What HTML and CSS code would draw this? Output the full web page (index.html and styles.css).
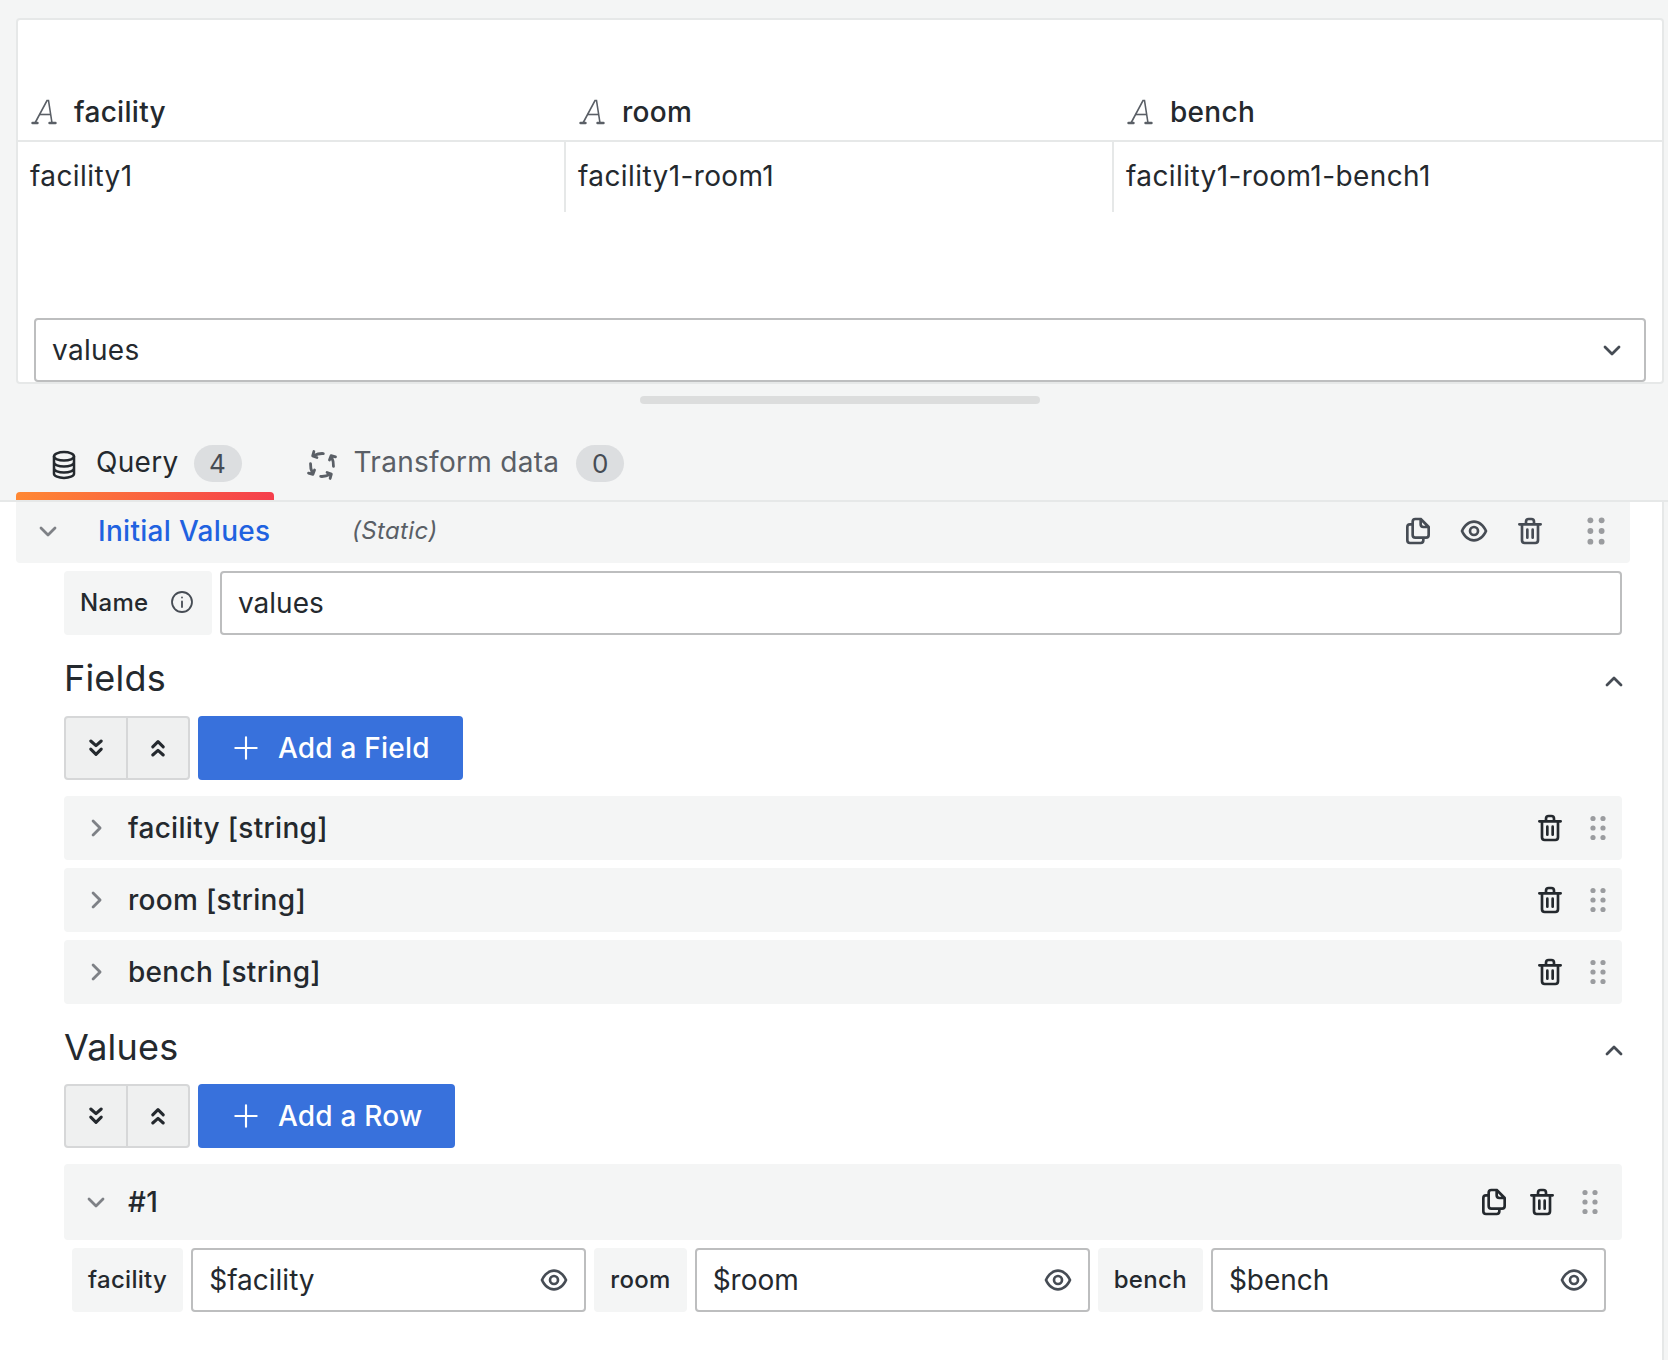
FILE: index.html
```html
<!DOCTYPE html>
<html lang="en">
<head>
    <meta charset="UTF-8">
    <title>Initial Values - Static</title>
    <link rel="stylesheet" href="styles.css">
</head>
<body>

<svg class="sprite" width="0" height="0">
    <symbol id="i-trash" viewBox="0 0 24 24"><path d="M10,18a1,1,0,0,0,1-1V11a1,1,0,0,0-2,0v6A1,1,0,0,0,10,18ZM20,6H16V5a3,3,0,0,0-3-3H11A3,3,0,0,0,8,5V6H4A1,1,0,0,0,4,8H5V19a3,3,0,0,0,3,3h8a3,3,0,0,0,3-3V8h1a1,1,0,0,0,0-2ZM10,5a1,1,0,0,1,1-1h2a1,1,0,0,1,1,1V6H10Zm7,14a1,1,0,0,1-1,1H8a1,1,0,0,1-1-1V8H17Zm-3-1a1,1,0,0,0,1-1V11a1,1,0,0,0-2,0v6A1,1,0,0,0,14,18Z"/></symbol>
    <symbol id="i-eye" viewBox="0 0 24 24"><path d="M21.92,11.6C19.9,6.91,16.1,4,12,4S4.1,6.91,2.08,11.6a1,1,0,0,0,0,.8C4.1,17.09,7.9,20,12,20s7.9-2.91,9.92-7.6A1,1,0,0,0,21.92,11.6ZM12,18c-3.17,0-6.17-2.29-7.9-6C5.83,8.29,8.83,6,12,6s6.17,2.29,7.9,6C18.17,15.71,15.17,18,12,18ZM12,8a4,4,0,1,0,4,4A4,4,0,0,0,12,8Zm0,6a2,2,0,1,1,2-2A2,2,0,0,1,12,14Z"/></symbol>
    <symbol id="i-copy" viewBox="0 0 24 24"><path d="M21,8.94a1.31,1.31,0,0,0-.06-.27l0-.09a1.07,1.07,0,0,0-.19-.28h0l-6-6h0a1.07,1.07,0,0,0-.28-.19.32.32,0,0,0-.09,0A.88.88,0,0,0,14.05,2H10A3,3,0,0,0,7,5V6H6A3,3,0,0,0,3,9V19a3,3,0,0,0,3,3h8a3,3,0,0,0,3-3V18h1a3,3,0,0,0,3-3V9S21,9,21,8.94ZM15,5.41,17.59,8H16a1,1,0,0,1-1-1ZM15,19a1,1,0,0,1-1,1H6a1,1,0,0,1-1-1V9A1,1,0,0,1,6,8H7v7a3,3,0,0,0,3,3h5Zm4-4a1,1,0,0,1-1,1H10a1,1,0,0,1-1-1V5a1,1,0,0,1,1-1h3V7a3,3,0,0,0,3,3h3Z"/></symbol>
    <symbol id="i-dots" viewBox="0 0 32 32"><circle cx="11" cy="6.5" r="2.6"/><circle cx="21" cy="6.5" r="2.6"/><circle cx="11" cy="16" r="2.6"/><circle cx="21" cy="16" r="2.6"/><circle cx="11" cy="25.5" r="2.6"/><circle cx="21" cy="25.5" r="2.6"/></symbol>
    <symbol id="i-down" viewBox="0 0 24 24"><path d="M6 9.5l6 6 6-6" fill="none" stroke="currentColor" stroke-width="2.4" stroke-linecap="round" stroke-linejoin="round"/></symbol>
    <symbol id="i-up" viewBox="0 0 24 24"><path d="M6 14.5l6-6 6 6" fill="none" stroke="currentColor" stroke-width="2.4" stroke-linecap="round" stroke-linejoin="round"/></symbol>
    <symbol id="i-right" viewBox="0 0 24 24"><path d="M9.5 6l6 6-6 6" fill="none" stroke="currentColor" stroke-width="2.4" stroke-linecap="round" stroke-linejoin="round"/></symbol>
    <symbol id="i-dbl-down" viewBox="0 0 24 24"><path d="M7.5 6l4.5 4 4.5-4M7.5 13l4.5 4.5 4.5-4.5" fill="none" stroke="currentColor" stroke-width="2.6" stroke-linecap="round" stroke-linejoin="round"/></symbol>
    <symbol id="i-dbl-up" viewBox="0 0 24 24"><path d="M7.5 11l4.5-4.5 4.5 4.5M7.5 18l4.5-4 4.5 4" fill="none" stroke="currentColor" stroke-width="2.6" stroke-linecap="round" stroke-linejoin="round"/></symbol>
    <symbol id="i-type" viewBox="0 0 32 32"><path d="M7 27L19 4.5h1.5L24 27" fill="none" stroke="currentColor" stroke-width="1.6"/><path d="M11.5 18.5h11" fill="none" stroke="currentColor" stroke-width="1.6"/><path d="M4.5 27h5M21.5 27h6" fill="none" stroke="currentColor" stroke-width="2.4" stroke-linecap="round"/></symbol>
</svg>

<section class="panel">
    <div class="table">
        <div class="table-head">
            <div class="th"><svg class="type-icon"><use href="#i-type"/></svg>facility</div>
            <div class="th"><svg class="type-icon"><use href="#i-type"/></svg>room</div>
            <div class="th"><svg class="type-icon"><use href="#i-type"/></svg>bench</div>
        </div>
        <div class="table-row">
            <div class="td">facility1</div>
            <div class="td">facility1-room1</div>
            <div class="td">facility1-room1-bench1</div>
        </div>
    </div>
    <div class="select">
        <span>values</span>
        <svg class="icon-sm dark"><use href="#i-down"/></svg>
    </div>
</section>

<div class="splitter"></div>

<nav class="tabs">
    <div class="tab active">
        <svg class="icon line-icon" viewBox="0 0 24 24" stroke="currentColor" stroke-width="1.9">
            <ellipse cx="12" cy="5.5" rx="7.5" ry="3.2"/>
            <path d="M4.5 5.5v13c0 1.8 3.4 3.2 7.5 3.2s7.5-1.4 7.5-3.2v-13M4.5 10c0 1.8 3.4 3.2 7.5 3.2s7.5-1.4 7.5-3.2M4.5 14.5c0 1.8 3.4 3.2 7.5 3.2s7.5-1.4 7.5-3.2"/>
        </svg>
        <span>Query</span>
        <span class="badge">4</span>
    </div>
    <div class="tab">
        <svg class="icon line-icon" viewBox="0 0 24 24" stroke="currentColor" stroke-width="2.1" stroke-linecap="round" stroke-linejoin="round">
            <g id="arrow-part"><path d="M13 3.4C10.8 3.2 8.8 3.5 5.6 5M5.9 1.9L5 5.2 8.2 6.4"/></g>
            <use href="#arrow-part" transform="rotate(90 12 12)"/>
            <use href="#arrow-part" transform="rotate(180 12 12)"/>
            <use href="#arrow-part" transform="rotate(270 12 12)"/>
        </svg>
        <span>Transform data</span>
        <span class="badge">0</span>
    </div>
</nav>

<main class="editor">
    <div class="query-head">
        <svg class="icon-sm chevron"><use href="#i-down"/></svg>
        <span class="query-name">Initial Values</span>
        <span class="query-type">(Static)</span>
        <div class="actions">
            <svg class="icon muted"><use href="#i-copy"/></svg>
            <svg class="icon muted"><use href="#i-eye"/></svg>
            <svg class="icon muted"><use href="#i-trash"/></svg>
            <svg class="icon dots dots-far"><use href="#i-dots"/></svg>
        </div>
    </div>

    <div class="query-body">
        <div class="name-row">
            <div class="label label-name">Name <svg class="info line-icon" viewBox="0 0 24 24" stroke="currentColor" stroke-width="1.8" stroke-linecap="round"><circle cx="12" cy="12" r="10"/><path d="M12 11.5v5.5M12 7.4v.2"/></svg></div>
            <div class="input">values</div>
        </div>

        <div class="section-title">
            <h3>Fields</h3>
            <svg class="icon-sm dark"><use href="#i-up"/></svg>
        </div>
        <div class="toolbar">
            <div class="btn-group">
                <div class="btn-square"><svg class="icon-sm"><use href="#i-dbl-down"/></svg></div>
                <div class="btn-square"><svg class="icon-sm"><use href="#i-dbl-up"/></svg></div>
            </div>
            <div class="btn-primary">
                <svg class="icon line-icon" viewBox="0 0 24 24" stroke="currentColor" stroke-width="1.6" stroke-linecap="round"><path d="M12 4v16M4 12h16"/></svg>
                Add a Field
            </div>
        </div>

        <div class="rows">
            <div class="row">
                <svg class="icon-sm chevron"><use href="#i-right"/></svg>
                <span>facility [string]</span>
                <div class="actions">
                    <svg class="icon"><use href="#i-trash"/></svg>
                    <svg class="icon dots"><use href="#i-dots"/></svg>
                </div>
            </div>
            <div class="row">
                <svg class="icon-sm chevron"><use href="#i-right"/></svg>
                <span>room [string]</span>
                <div class="actions">
                    <svg class="icon"><use href="#i-trash"/></svg>
                    <svg class="icon dots"><use href="#i-dots"/></svg>
                </div>
            </div>
            <div class="row">
                <svg class="icon-sm chevron"><use href="#i-right"/></svg>
                <span>bench [string]</span>
                <div class="actions">
                    <svg class="icon"><use href="#i-trash"/></svg>
                    <svg class="icon dots"><use href="#i-dots"/></svg>
                </div>
            </div>
        </div>

        <div class="section-title section-values">
            <h3>Values</h3>
            <svg class="icon-sm dark"><use href="#i-up"/></svg>
        </div>
        <div class="toolbar">
            <div class="btn-group">
                <div class="btn-square"><svg class="icon-sm"><use href="#i-dbl-down"/></svg></div>
                <div class="btn-square"><svg class="icon-sm"><use href="#i-dbl-up"/></svg></div>
            </div>
            <div class="btn-primary">
                <svg class="icon line-icon" viewBox="0 0 24 24" stroke="currentColor" stroke-width="1.6" stroke-linecap="round"><path d="M12 4v16M4 12h16"/></svg>
                Add a Row
            </div>
        </div>

        <div class="rows">
            <div class="row row-tall">
                <svg class="icon-sm chevron"><use href="#i-down"/></svg>
                <span>#1</span>
                <div class="actions actions-tight">
                    <svg class="icon"><use href="#i-copy"/></svg>
                    <svg class="icon"><use href="#i-trash"/></svg>
                    <svg class="icon dots"><use href="#i-dots"/></svg>
                </div>
            </div>
        </div>

        <div class="value-row">
            <div class="label">facility</div>
            <div class="input grow">$facility<svg class="icon muted"><use href="#i-eye"/></svg></div>
            <div class="label">room</div>
            <div class="input grow">$room<svg class="icon muted"><use href="#i-eye"/></svg></div>
            <div class="label">bench</div>
            <div class="input grow">$bench<svg class="icon muted"><use href="#i-eye"/></svg></div>
        </div>
    </div>
</main>

</body>
</html>
```

FILE: styles.css
```css
* {
    box-sizing: border-box;
}
html, body {
    height: 100%;
}
body {
    margin: 0;
    padding-top: 18px;
    display: flex;
    flex-direction: column;
    background-color: #f4f5f5;
    color: #24292e;
    font-family: Inter, "Noto Sans", sans-serif;
    font-size: 28px;
    letter-spacing: 0.3px;
}
.sprite {
    position: absolute;
}
.icon {
    width: 32px;
    height: 32px;
    flex: none;
    fill: currentColor;
}
.icon-sm {
    width: 28px;
    height: 28px;
    flex: none;
    fill: currentColor;
}
.line-icon {
    fill: none;
}
.muted {
    color: #464c54;
}
.dark {
    color: #464c54;
}
.chevron {
    color: #7e8186;
}
.dots {
    color: #9a9c9f;
}

/* table panel */
.panel {
    height: 366px;
    margin: 0 4px 0 16px;
    background-color: #fff;
    border: 2px solid #e6e8e8;
    border-radius: 4px;
}
.table-head {
    display: flex;
    height: 122px;
    align-items: flex-end;
    border-bottom: 2px solid #e6e8e8;
}
.th {
    width: 548px;
    height: 52px;
    padding: 0 0 4px 10px;
    display: flex;
    align-items: center;
    gap: 14px;
    font-weight: 500;
}
.type-icon {
    width: 32px;
    height: 32px;
    color: #5a5f66;
}
.table-row {
    display: flex;
    height: 70px;
}
.td {
    width: 548px;
    padding: 16px 12px 0 12px;
    border-right: 2px solid #e6e8e8;
    line-height: 36px;
    letter-spacing: 0.4px;
}
.td:last-child {
    border-right: none;
}
.select {
    height: 64px;
    margin: 106px 16px 0;
    padding: 0 18px 0 16px;
    display: flex;
    align-items: center;
    justify-content: space-between;
    border: 2px solid #bdbebf;
    border-radius: 4px;
}
.splitter {
    width: 400px;
    height: 8px;
    margin: 12px 0 0 640px;
    background-color: #dcdddd;
    border-radius: 4px;
}

/* tabs */
.tabs {
    display: flex;
    height: 98px;
    padding-left: 16px;
    border-bottom: 2px solid #e6e8e8;
}
.tab {
    height: 96px;
    padding: 41px 32px 0;
    display: flex;
    align-items: flex-start;
    gap: 16px;
    line-height: 35px;
    color: #5a5f66;
    position: relative;
}
.tab .icon {
    margin-top: 4px;
}
.tab.active {
    color: #24292e;
}
.tab.active::after {
    content: "";
    position: absolute;
    left: 0;
    right: 0;
    bottom: 0;
    height: 8px;
    border-radius: 4px 4px 0 0;
    background-image: linear-gradient(90deg, #ff8833, #f53e4c);
}
.badge {
    width: 48px;
    height: 37px;
    margin-left: 1px;
    border-radius: 19px;
    background-color: #dcdee0;
    text-align: center;
    font-size: 26px;
    line-height: 37px;
    color: #464c54;
}
.tab.active .badge {
    margin-left: -1px;
}

/* query editor */
.editor {
    flex: 1;
    background-color: #fff;
    border-right: 2px solid #e6e8e8;
    margin-right: 4px;
}
.query-head {
    height: 61px;
    margin: 0 32px 0 16px;
    padding: 0 0 4px 18px;
    display: flex;
    align-items: center;
    background-color: #f4f5f5;
    border-radius: 0 0 4px 4px;
}
.query-name {
    margin-left: 36px;
    width: 254px;
    color: #1f62e0;
    font-weight: 500;
}
.query-type {
    font-size: 24px;
    font-style: italic;
    letter-spacing: 0.4px;
    color: #5a5f66;
}
.actions {
    margin-left: auto;
    margin-right: 16px;
    display: flex;
    align-items: center;
    gap: 24px;
}
.dots-far {
    width: 36px;
    height: 36px;
    margin-left: 8px;
}
.query-body {
    padding: 8px 40px 0 64px;
}
.name-row {
    display: flex;
    gap: 8px;
}
.label {
    height: 64px;
    padding: 0 16px 2px;
    flex: none;
    display: flex;
    align-items: center;
    gap: 22px;
    background-color: #f4f5f5;
    border-radius: 4px;
    font-size: 24px;
    font-weight: 500;
    letter-spacing: 0.3px;
}
.label-name {
    width: 148px;
}
.info {
    width: 24px;
    height: 24px;
    color: #464c54;
}
.input {
    flex: 1;
    height: 64px;
    padding: 0 14px 0 16px;
    display: flex;
    align-items: center;
    justify-content: space-between;
    border: 2px solid #bdbebf;
    border-radius: 4px;
    letter-spacing: 0;
}
.grow {
    flex: 1 1 0;
}
.section-title {
    height: 81px;
    padding-top: 4px;
    display: flex;
    align-items: center;
    justify-content: space-between;
}
.section-values {
    height: 80px;
    padding-top: 6px;
}
.section-title .icon-sm {
    margin: 8px -6px 0 0;
}
.section-title h3 {
    margin: 0;
    font-size: 36px;
    font-weight: 400;
    letter-spacing: 0.2px;
}
.toolbar {
    display: flex;
    gap: 8px;
}
.btn-group {
    display: flex;
    border: 2px solid #d6d7d8;
    border-radius: 4px;
    background-color: #eff0f0;
}
.btn-square {
    width: 60px;
    height: 60px;
    display: flex;
    align-items: center;
    justify-content: center;
}
.btn-square + .btn-square {
    width: 62px;
    border-left: 2px solid #d6d7d8;
}
.btn-primary {
    height: 64px;
    padding: 0 33px 0 32px;
    display: flex;
    align-items: center;
    gap: 16px;
    background-color: #3871dc;
    border-radius: 4px;
    color: #fff;
    font-weight: 500;
    letter-spacing: 0.2px;
}
.rows {
    margin-top: 16px;
    display: flex;
    flex-direction: column;
    gap: 8px;
}
.row {
    height: 64px;
    padding-left: 18px;
    display: flex;
    align-items: center;
    gap: 18px;
    background-color: #f4f5f5;
    border-radius: 4px;
    font-weight: 500;
}
.row .actions {
    gap: 16px;
    margin-right: 8px;
}
.row-tall {
    height: 76px;
}
.row .actions-tight {
    margin-right: 16px;
}
.value-row {
    margin-top: 8px;
    padding: 0 16px 0 8px;
    display: flex;
    gap: 8px;
}
```
